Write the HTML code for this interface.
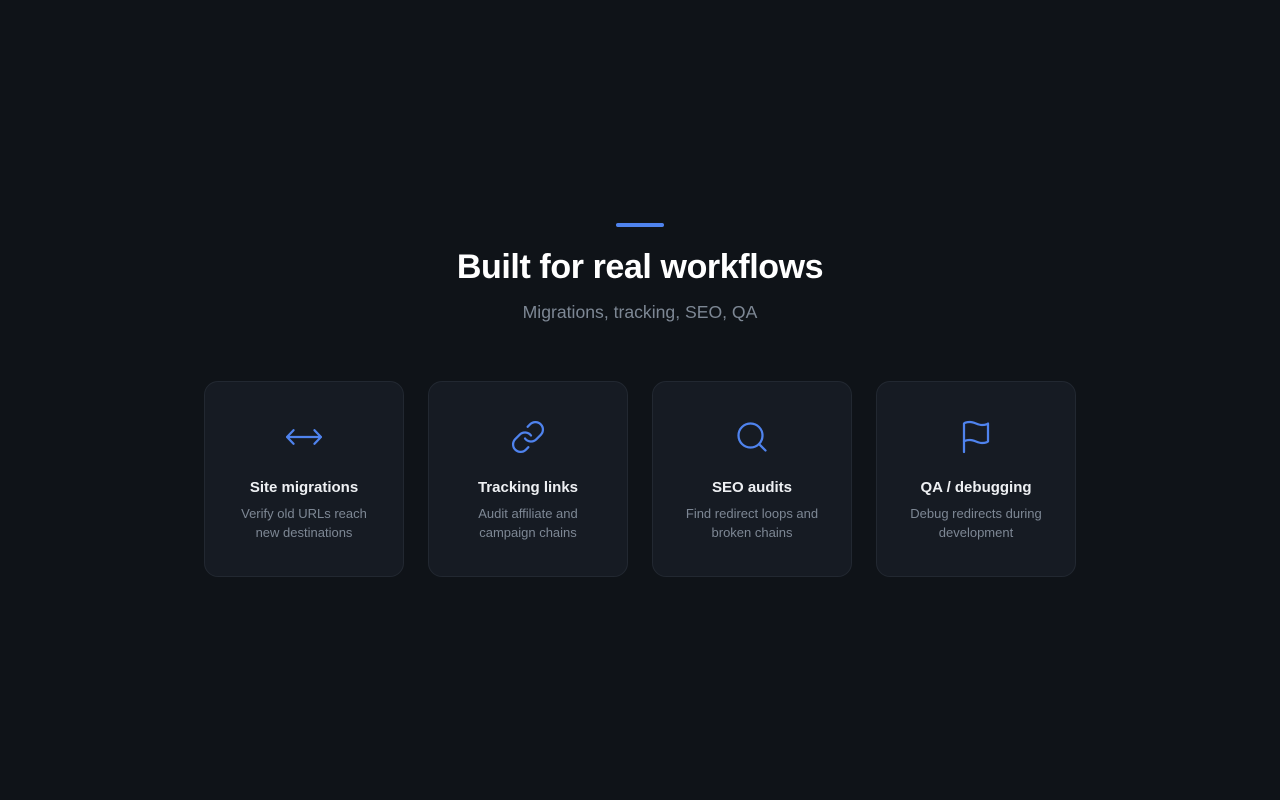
<!DOCTYPE html>
<html><head><meta charset="utf-8"><style>
*{margin:0;padding:0;box-sizing:border-box}
body{width:1280px;height:800px;background:#0f1318;font-family:"Liberation Sans",sans-serif;position:relative;overflow:hidden}
.bar{position:absolute;left:616px;top:223px;width:48px;height:4px;border-radius:2px;background:#4f83ee}
h1{position:absolute;top:248px;left:0;width:1280px;text-align:center;color:#fff;font-size:34px;font-weight:bold;letter-spacing:-0.4px}
.sub{position:absolute;top:302px;left:0;width:1280px;text-align:center;color:#7d8794;font-size:17.6px}
.card{position:absolute;top:381px;width:200px;height:196px;background:#161b23;border:1px solid #222831;border-radius:14px;text-align:center}
.card svg{position:absolute;left:81px;top:37px}
.t{position:absolute;top:97px;left:0;width:100%;color:#eef0f3;font-size:15px;font-weight:bold}
.d{position:absolute;top:122px;left:28px;width:142px;color:#7d8794;font-size:13px;line-height:19px}
</style></head><body>
<div class="bar"></div>
<h1>Built for real workflows</h1>
<div class="sub">Migrations, tracking, SEO, QA</div>
<div class="card" style="left:204px"><svg width="36" height="36" viewBox="0 0 24 24" fill="none" stroke="#4f83ee" stroke-width="1.5" stroke-linecap="round" stroke-linejoin="round"><path d="M5 7.5l-4.3 4.5 4.3 4.5M19 7.5l4.3 4.5-4.3 4.5M0.7 12h22.6"/></svg><div class="t">Site migrations</div><div class="d">Verify old URLs reach new destinations</div></div>
<div class="card" style="left:428px"><svg width="36" height="36" viewBox="0 0 24 24" fill="none" stroke="#4f83ee" stroke-width="1.5" stroke-linecap="round" stroke-linejoin="round"><path d="M10 13a5 5 0 0 0 7.54.54l3-3a5 5 0 0 0-7.07-7.07l-1.72 1.71"/><path d="M14 11a5 5 0 0 0-7.54-.54l-3 3a5 5 0 0 0 7.07 7.07l1.71-1.71"/></svg><div class="t">Tracking links</div><div class="d">Audit affiliate and campaign chains</div></div>
<div class="card" style="left:652px"><svg width="36" height="36" viewBox="0 0 24 24" fill="none" stroke="#4f83ee" stroke-width="1.5" stroke-linecap="round" stroke-linejoin="round"><circle cx="11" cy="11" r="8"/><path d="M21 21l-4.3-4.3"/></svg><div class="t">SEO audits</div><div class="d">Find redirect loops and broken chains</div></div>
<div class="card" style="left:876px"><svg width="36" height="36" viewBox="0 0 24 24" fill="none" stroke="#4f83ee" stroke-width="1.5" stroke-linecap="round" stroke-linejoin="round"><path d="M4 15s1-1 4-1 5 2 8 2 4-1 4-1V3s-1 1-4 1-5-2-8-2-4 1-4 1z"/><path d="M4 22v-7"/></svg><div class="t">QA / debugging</div><div class="d">Debug redirects during development</div></div>
</body></html>
